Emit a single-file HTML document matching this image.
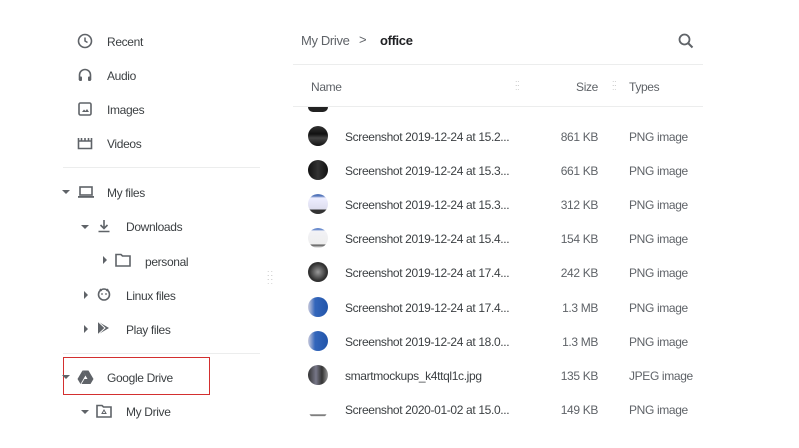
<!DOCTYPE html>
<html><head><meta charset="utf-8"><style>
body{margin:0;width:799px;height:448px;background:#fff;font-family:"Liberation Sans",sans-serif;color:#3c4043;position:relative;overflow:hidden;font-size:12px;letter-spacing:-0.35px}
.a{position:absolute;white-space:nowrap}
.s{position:absolute;white-space:nowrap;right:201px;color:#5f6368}
.ic{position:absolute}
.sep{position:absolute;height:1px;background:#eceded}
.circ{position:absolute;left:308px;width:20px;height:20px;border-radius:50%}
.tri{position:absolute;width:0;height:0}
.td{border-left:4px solid transparent;border-right:4px solid transparent;border-top:4px solid #5f6368}
.tr{border-top:4px solid transparent;border-bottom:4px solid transparent;border-left:4px solid #5f6368}
</style></head><body>
<svg class="ic" style="left:77px;top:33px" width="16" height="16" viewBox="0 0 16 16"><circle cx="8" cy="8" r="6.5" fill="none" stroke="#5f6368" stroke-width="1.6"/><path d="M8 4.5V8l2.5 1.5" fill="none" stroke="#5f6368" stroke-width="1.5"/></svg>
<div class="a" style="left:107px;top:35px">Recent</div>
<svg class="ic" style="left:77px;top:67px" width="16" height="16" viewBox="0 0 16 16"><path d="M2.5 13V8a5.5 5.5 0 0 1 11 0v5" fill="none" stroke="#5f6368" stroke-width="1.6"/><rect x="2" y="9.5" width="3" height="4.5" rx="1" fill="#5f6368"/><rect x="11" y="9.5" width="3" height="4.5" rx="1" fill="#5f6368"/></svg>
<div class="a" style="left:107px;top:69px">Audio</div>
<svg class="ic" style="left:78px;top:102px" width="14" height="14" viewBox="0 0 14 14"><rect x="1" y="1" width="12" height="12" rx="1.5" fill="none" stroke="#5f6368" stroke-width="1.6"/><path d="M4 10l2-2.5 1.5 1.5 1.5-2 2 3z" fill="#5f6368"/></svg>
<div class="a" style="left:107px;top:103px">Images</div>
<svg class="ic" style="left:77px;top:136px" width="16" height="14" viewBox="0 0 16 14"><path d="M1.5 2v10.5h13V2M1.5 5h13M4.5 2v3M8 2v3M11.5 2v3" fill="none" stroke="#5f6368" stroke-width="1.6"/></svg>
<div class="a" style="left:107px;top:137px">Videos</div>
<div class="sep" style="left:63px;top:167px;width:197px"></div>
<div class="tri td" style="left:62px;top:190px"></div>
<svg class="ic" style="left:77px;top:185px" width="18" height="14" viewBox="0 0 18 14"><rect x="3" y="2" width="12" height="8" fill="none" stroke="#5f6368" stroke-width="1.6"/><rect x="1" y="11" width="16" height="1.8" fill="#5f6368"/></svg>
<div class="a" style="left:107px;top:186px">My files</div>
<div class="tri td" style="left:81px;top:225px"></div>
<svg class="ic" style="left:97px;top:219px" width="14" height="14" viewBox="0 0 14 14"><path d="M7 1v8M3.5 6l3.5 3.5L10.5 6M1.5 12.5h11" fill="none" stroke="#5f6368" stroke-width="1.6"/></svg>
<div class="a" style="left:126px;top:220px">Downloads</div>
<div class="tri tr" style="left:103px;top:256px"></div>
<svg class="ic" style="left:115px;top:253px" width="16" height="14" viewBox="0 0 16 14"><path d="M1 1.5h5l1.5 1.5H15v10H1z" fill="none" stroke="#5f6368" stroke-width="1.6"/></svg>
<div class="a" style="left:145px;top:255px">personal</div>
<div class="tri tr" style="left:84px;top:291px"></div>
<svg class="ic" style="left:96px;top:286px" width="16" height="16" viewBox="0 0 16 16"><circle cx="8" cy="8.5" r="5.5" fill="none" stroke="#5f6368" stroke-width="1.6"/><path d="M4 3l1.5 2M12 3l-1.5 2" stroke="#5f6368" stroke-width="1.5"/><circle cx="6" cy="8" r=".9" fill="#5f6368"/><circle cx="10" cy="8" r=".9" fill="#5f6368"/></svg>
<div class="a" style="left:126px;top:289px">Linux files</div>
<div class="tri tr" style="left:84px;top:325px"></div>
<svg class="ic" style="left:96px;top:320px" width="16" height="16" viewBox="0 0 16 16"><path d="M2 1.5v13L13 8z" fill="#5f6368"/><path d="M2 1.5L9 8 2 14.5" fill="none" stroke="#fff" stroke-width="1"/></svg>
<div class="a" style="left:126px;top:323px">Play files</div>
<div class="sep" style="left:63px;top:353px;width:197px"></div>
<div style="position:absolute;left:63px;top:357px;width:145px;height:36px;border:1.5px solid #d32f2f"></div>
<div class="tri td" style="left:62px;top:375px"></div>
<svg class="ic" style="left:77px;top:370px" width="17" height="14" viewBox="0 0 17 14"><path d="M5.5 0.5h6l5 8.5h-6z" fill="#5f6368"/><path d="M5.5 0.5L0.5 9l3 5 5-8.5z" fill="#5f6368"/><path d="M4.5 14l3-5h9l-3 5z" fill="#5f6368"/></svg>
<div class="a" style="left:107px;top:371px">Google Drive</div>
<div class="tri td" style="left:81px;top:410px"></div>
<svg class="ic" style="left:96px;top:404px" width="16" height="14" viewBox="0 0 16 14"><path d="M1 1.5h5l1.5 1.5H15v10H1z" fill="none" stroke="#5f6368" stroke-width="1.6"/><path d="M8 6l2 3.5H6z" fill="none" stroke="#5f6368" stroke-width="1"/></svg>
<div class="a" style="left:126px;top:405px">My Drive</div>
<div class="a" style="left:267px;top:271px;color:#ccc;font-size:9px;line-height:4px;letter-spacing:1px">::<br>::<br>::</div>
<div class="a" style="left:301px;top:33px;font-size:13px;color:#5f6368">My Drive</div>
<div class="a" style="left:359px;top:32px;font-size:13px;color:#5f6368">&gt;</div>
<div class="a" style="left:380px;top:33px;font-size:13px;color:#202124;font-weight:bold">office</div>
<svg class="ic" style="left:678px;top:33px" width="16" height="16" viewBox="0 0 16 16"><circle cx="6.5" cy="6.5" r="5" fill="none" stroke="#5f6368" stroke-width="1.8"/><path d="M10 10l4.5 4.5" stroke="#5f6368" stroke-width="2"/></svg>
<div class="sep" style="left:293px;top:64px;width:410px"></div>
<div class="a" style="left:311px;top:80px;color:#5f6368">Name</div>
<div class="a" style="left:515px;top:81px;color:#ccc;font-size:9px;line-height:4px">::<br>::</div>
<div class="s" style="top:80px">Size</div>
<div class="a" style="left:612px;top:81px;color:#ccc;font-size:9px;line-height:4px">::<br>::</div>
<div class="a" style="left:629px;top:80px;color:#5f6368">Types</div>
<div class="sep" style="left:293px;top:106px;width:410px"></div>
<div style="position:absolute;left:308px;top:107px;width:20px;height:5px;background:#222;border-radius:0 0 10px 10px"></div>

<div class="circ" style="top:126px;background:linear-gradient(#333,#111 40%,#444 60%,#111)"></div>
<div class="a" style="left:345px;top:130px">Screenshot 2019-12-24 at 15.2...</div><div class="s" style="top:130px">861 KB</div><div class="a" style="left:629px;top:130px;color:#5f6368">PNG image</div>
<div class="circ" style="top:160px;background:linear-gradient(90deg,#111,#333 50%,#111)"></div>
<div class="a" style="left:345px;top:164px">Screenshot 2019-12-24 at 15.3...</div><div class="s" style="top:164px">661 KB</div><div class="a" style="left:629px;top:164px;color:#5f6368">PNG image</div>
<div class="circ" style="top:194px;background:linear-gradient(#5577bb 10%,#eef 20%,#dde 75%,#333 80%)"></div>
<div class="a" style="left:345px;top:198px">Screenshot 2019-12-24 at 15.3...</div><div class="s" style="top:198px">312 KB</div><div class="a" style="left:629px;top:198px;color:#5f6368">PNG image</div>
<div class="circ" style="top:228px;background:linear-gradient(#6688cc 8%,#f2f2f6 15%,#eee 80%,#555 85%,#fff)"></div>
<div class="a" style="left:345px;top:232px">Screenshot 2019-12-24 at 15.4...</div><div class="s" style="top:232px">154 KB</div><div class="a" style="left:629px;top:232px;color:#5f6368">PNG image</div>
<div class="circ" style="top:262px;background:radial-gradient(#999,#333 60%,#222)"></div>
<div class="a" style="left:345px;top:266px">Screenshot 2019-12-24 at 17.4...</div><div class="s" style="top:266px">242 KB</div><div class="a" style="left:629px;top:266px;color:#5f6368">PNG image</div>
<div class="circ" style="top:297px;background:linear-gradient(90deg,#ccd 0,#3366bb 35%,#2255aa)"></div>
<div class="a" style="left:345px;top:301px">Screenshot 2019-12-24 at 17.4...</div><div class="s" style="top:301px">1.3 MB</div><div class="a" style="left:629px;top:301px;color:#5f6368">PNG image</div>
<div class="circ" style="top:331px;background:linear-gradient(90deg,#ccd 0,#3366bb 35%,#2255aa)"></div>
<div class="a" style="left:345px;top:335px">Screenshot 2019-12-24 at 18.0...</div><div class="s" style="top:335px">1.3 MB</div><div class="a" style="left:629px;top:335px;color:#5f6368">PNG image</div>
<div class="circ" style="top:365px;background:linear-gradient(90deg,#333,#778 40%,#333 70%,#999)"></div>
<div class="a" style="left:345px;top:369px">smartmockups_k4ttql1c.jpg</div><div class="s" style="top:369px">135 KB</div><div class="a" style="left:629px;top:369px;color:#5f6368">JPEG image</div>
<div class="circ" style="top:399px;background:linear-gradient(#fff 75%,#444 80%,#fff 88%)"></div>
<div class="a" style="left:345px;top:403px">Screenshot 2020-01-02 at 15.0...</div><div class="s" style="top:403px">149 KB</div><div class="a" style="left:629px;top:403px;color:#5f6368">PNG image</div>
</body></html>
